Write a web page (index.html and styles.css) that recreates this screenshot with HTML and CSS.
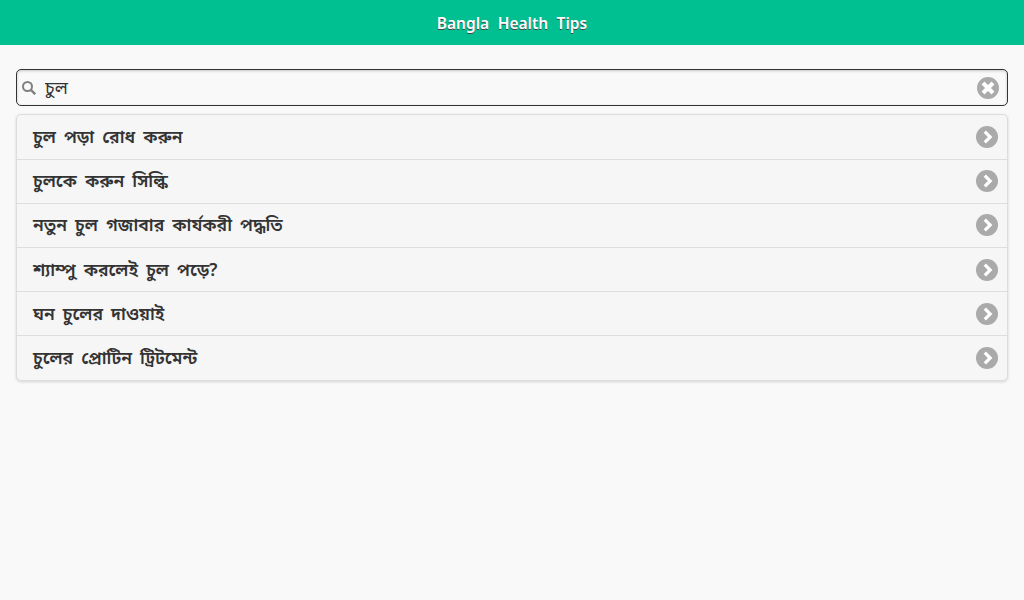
FILE: index.html
```html
<!DOCTYPE html>
<html lang="bn">
<head>
    <meta charset="UTF-8">
    <meta name="viewport" content="width=device-width, initial-scale=1">
    <title>Bangla Health Tips</title>
    <link rel="stylesheet" href="styles.css">
</head>
<body>
    <div class="header">
        <h1>Bangla Health Tips</h1>
    </div>

    <div class="content">
        <div class="search">
            <svg width="14" height="14" viewBox="0 0 14 14"><circle cx="5.5" cy="5.5" r="4.5" fill="none" stroke="#808080" stroke-width="2"/><path d="M8.8 8.8L13.2 13.2" stroke="#808080" stroke-width="2.4"/></svg>
            <input type="text" value="চুল">
            <span class="icon"><svg width="14" height="14" viewBox="0 0 14 14"><path d="M2 2L12 12M12 2L2 12" stroke="#fff" stroke-width="4"/></svg></span>
        </div>

        <ul class="list">
            <li><a href="#">চুল পড়া রোধ করুন</a><span class="icon"><svg width="14" height="14" viewBox="0 0 14 14"><path d="M4.8 1.6L10.2 7L4.8 12.4" fill="none" stroke="#fff" stroke-width="3.2"/></svg></span></li>
            <li class="up"><a href="#">চুলকে করুন সিল্কি</a><span class="icon"><svg width="14" height="14" viewBox="0 0 14 14"><path d="M4.8 1.6L10.2 7L4.8 12.4" fill="none" stroke="#fff" stroke-width="3.2"/></svg></span></li>
            <li class="up"><a href="#">নতুন চুল গজাবার কার্যকরী পদ্ধতি</a><span class="icon"><svg width="14" height="14" viewBox="0 0 14 14"><path d="M4.8 1.6L10.2 7L4.8 12.4" fill="none" stroke="#fff" stroke-width="3.2"/></svg></span></li>
            <li><a href="#">শ্যাম্পু করলেই চুল পড়ে?</a><span class="icon"><svg width="14" height="14" viewBox="0 0 14 14"><path d="M4.8 1.6L10.2 7L4.8 12.4" fill="none" stroke="#fff" stroke-width="3.2"/></svg></span></li>
            <li><a href="#">ঘন চুলের দাওয়াই</a><span class="icon"><svg width="14" height="14" viewBox="0 0 14 14"><path d="M4.8 1.6L10.2 7L4.8 12.4" fill="none" stroke="#fff" stroke-width="3.2"/></svg></span></li>
            <li><a href="#">চুলের প্রোটিন ট্রিটমেন্ট</a><span class="icon"><svg width="14" height="14" viewBox="0 0 14 14"><path d="M4.8 1.6L10.2 7L4.8 12.4" fill="none" stroke="#fff" stroke-width="3.2"/></svg></span></li>
        </ul>
    </div>
</body>
</html>
```

FILE: styles.css
```css
* {
    margin: 0;
    padding: 0;
    box-sizing: border-box;
}

body {
    font-family: "Noto Sans", "Noto Sans Bengali", sans-serif;
    font-size: 16px;
    color: #333;
    background: #f9f9f9;
}

.header {
    height: 45px;
    background: #00bf91;
}

h1 {
    font-size: 15.5px;
    font-weight: 600;
    line-height: 46px;
    word-spacing: 4.5px;
    text-align: center;
    color: #fff;
    text-shadow: 0 1px 0 #444;
}

.content {
    padding: 24px 16px;
}

.search {
    display: flex;
    align-items: center;
    height: 37px;
    padding: 0 8px 0 5px;
    border: 1px solid #333;
    border-radius: 5px;
    background: #f9f9f9;
    box-shadow: inset 0 1px 3px rgba(0, 0, 0, 0.2);
}

.search input {
    flex: 1;
    margin-left: 9px;
    border: none;
    outline: none;
    background: transparent;
    font-family: inherit;
    font-size: 18px;
    color: #333;
}

.icon {
    display: flex;
    align-items: center;
    justify-content: center;
    width: 22px;
    height: 22px;
    border-radius: 50%;
    background: #aaa;
}

.list {
    margin-top: 8px;
    border: 1px solid #ddd;
    border-radius: 5px;
    background: #f6f6f6;
    box-shadow: 0 1px 3px rgba(0, 0, 0, 0.15);
    list-style: none;
}

.list li {
    display: flex;
    align-items: center;
    justify-content: space-between;
    height: 44px;
    padding: 0 9px 0 16px;
    border-top: 1px solid #ddd;
}

.list li:first-child {
    border-top: none;
}

.list li:last-child {
    height: 45px;
}

.list li.up {
    padding-bottom: 1px;
}

.list a {
    font-size: 17.6px;
    font-weight: 600;
    word-spacing: 3.5px;
    color: #333;
    text-decoration: none;
    text-shadow: 0 1px 0 #f3f3f3;
}
```
